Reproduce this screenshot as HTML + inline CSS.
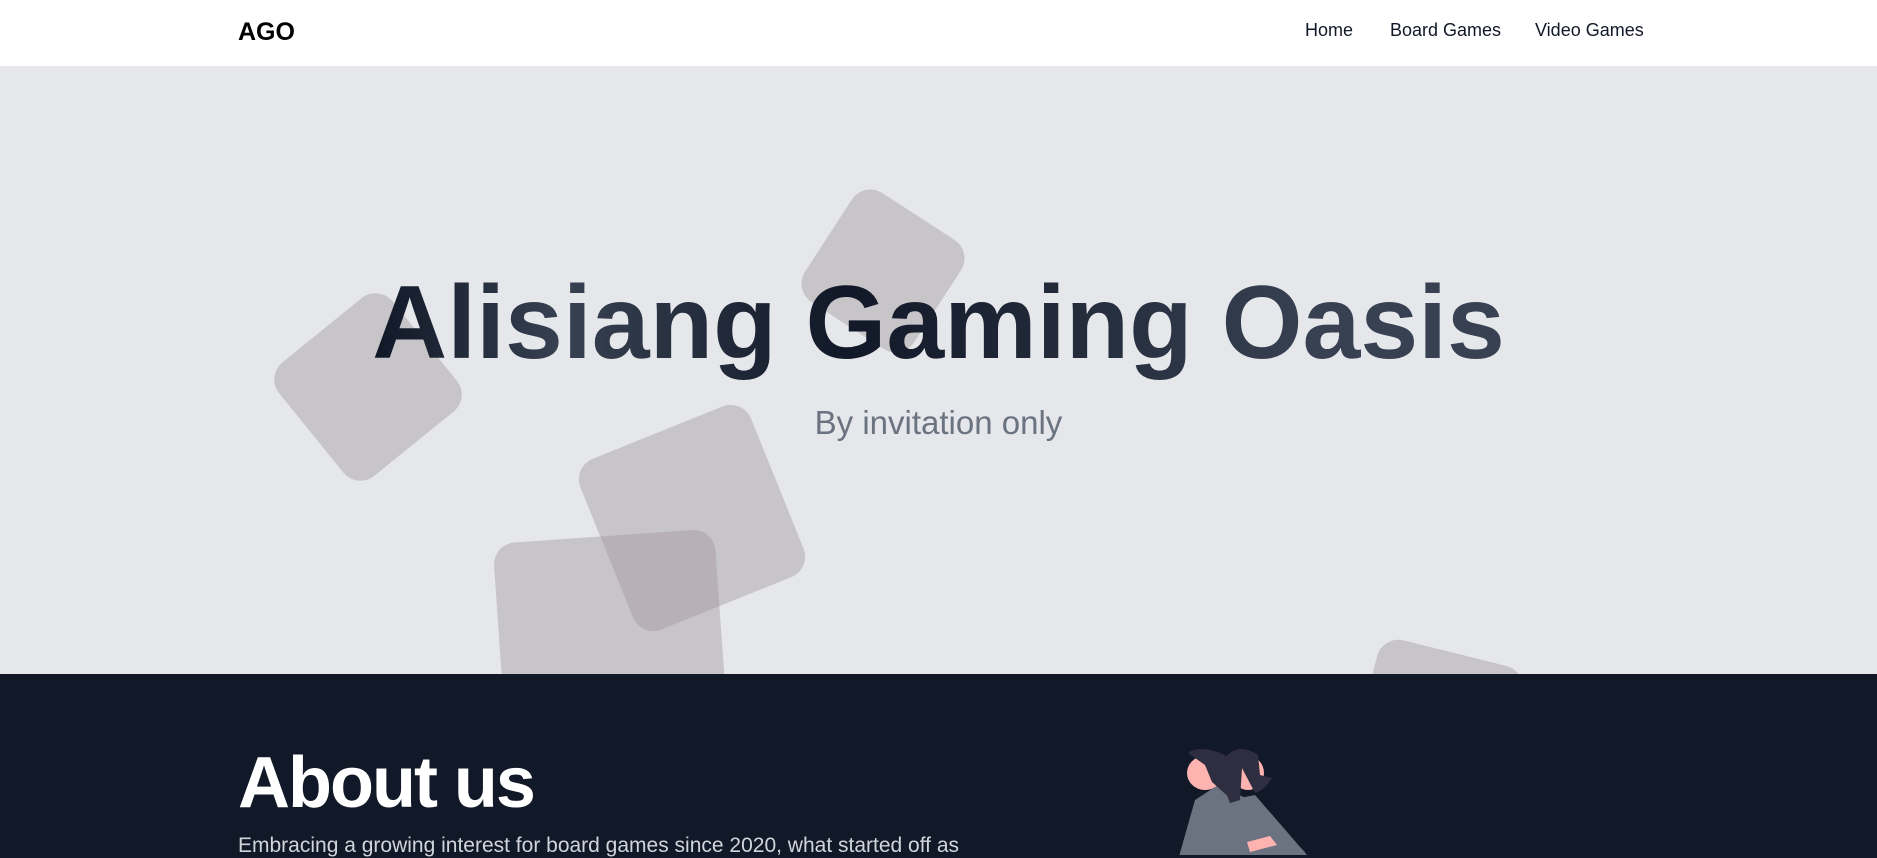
<!DOCTYPE html>
<html><head><meta charset="utf-8"><style>
*{margin:0;padding:0;box-sizing:border-box}
body{width:1877px;height:855px;overflow:hidden;font-family:"Liberation Sans","DejaVu Sans",sans-serif;background:#111827}
nav{position:absolute;top:0;left:0;width:1877px;height:66px;background:#fff}
.logo{position:absolute;left:238px;top:18px;font-size:25px;color:#000;font-weight:bold}
.links a{position:absolute;top:20px;font-size:18px;color:#111827;text-decoration:none}
.hero{position:absolute;top:66px;left:0;width:1877px;height:608px;background:#e5e7eb;overflow:hidden}
.sq{position:absolute;background:rgba(160,150,155,0.42);border-radius:22px}
h1{position:absolute;left:0;width:1877px;top:198px;text-align:center;font-family:"Liberation Sans",sans-serif;font-weight:bold;font-size:104px;background:linear-gradient(90deg,#111827 20%,#374151 30%,#111827 45%,#374151 70%);-webkit-background-clip:text;color:transparent}
.sub{position:absolute;left:0;width:1877px;top:338px;text-align:center;font-size:33px;color:#6b7280}
.about{position:absolute;left:238px;top:742px;font-size:72px;letter-spacing:-2px;font-weight:bold;color:#fff;font-family:"Liberation Sans",sans-serif}
.txt{position:absolute;left:238px;top:834px;font-size:21px;color:#d1d5db}
</style></head><body>
<nav><div class="logo">AGO</div><div class="links"><a style="left:1305px">Home</a><a style="left:1390px">Board Games</a><a style="left:1535px">Video Games</a></div></nav>
<div class="hero">
<div class="sq" style="left:818px;top:140px;width:130px;height:130px;transform:rotate(33deg)"></div>
<div class="sq" style="left:295px;top:248px;width:146px;height:146px;transform:rotate(-39deg)"></div>
<div class="sq" style="left:600px;top:360px;width:184px;height:184px;transform:rotate(-22deg)"></div>
<div class="sq" style="left:500px;top:470px;width:222px;height:222px;transform:rotate(-4deg)"></div>
<div class="sq" style="left:1362px;top:585px;width:150px;height:150px;transform:rotate(14deg)"></div>
<h1>Alisiang Gaming Oasis</h1>
<div class="sub">By invitation only</div>
</div>
<div class="about">About us</div>
<div class="txt">Embracing a growing interest for board games since 2020, what started off as</div>
<svg style="position:absolute;left:1100px;top:660px" width="400" height="195" viewBox="0 0 400 195">
<path d="M78,200 L95,140 L118,125 L150,140 L205,192 L200,200Z" fill="#6b7280"/>
<path d="M130,140 L155,135 L207,195 L170,200Z" fill="#6b7280"/>
<ellipse cx="105" cy="113" rx="18" ry="17" fill="#ffb3b0"/>
<ellipse cx="148" cy="113" rx="16" ry="17" fill="#ffb3b0"/>
<path d="M88,93 Q100,84 125,95 L132,140 L112,122 L105,105 Z" fill="#2f2e41"/>
<path d="M125,97 Q140,82 158,95 L160,115 L172,118 Q165,130 155,133 L142,108 L140,140 L130,143 Q120,120 125,97Z" fill="#2f2e41"/>
<path d="M147,182 L170,176 L177,185 L150,192Z" fill="#ffb3b0"/>
</svg>
</body></html>
